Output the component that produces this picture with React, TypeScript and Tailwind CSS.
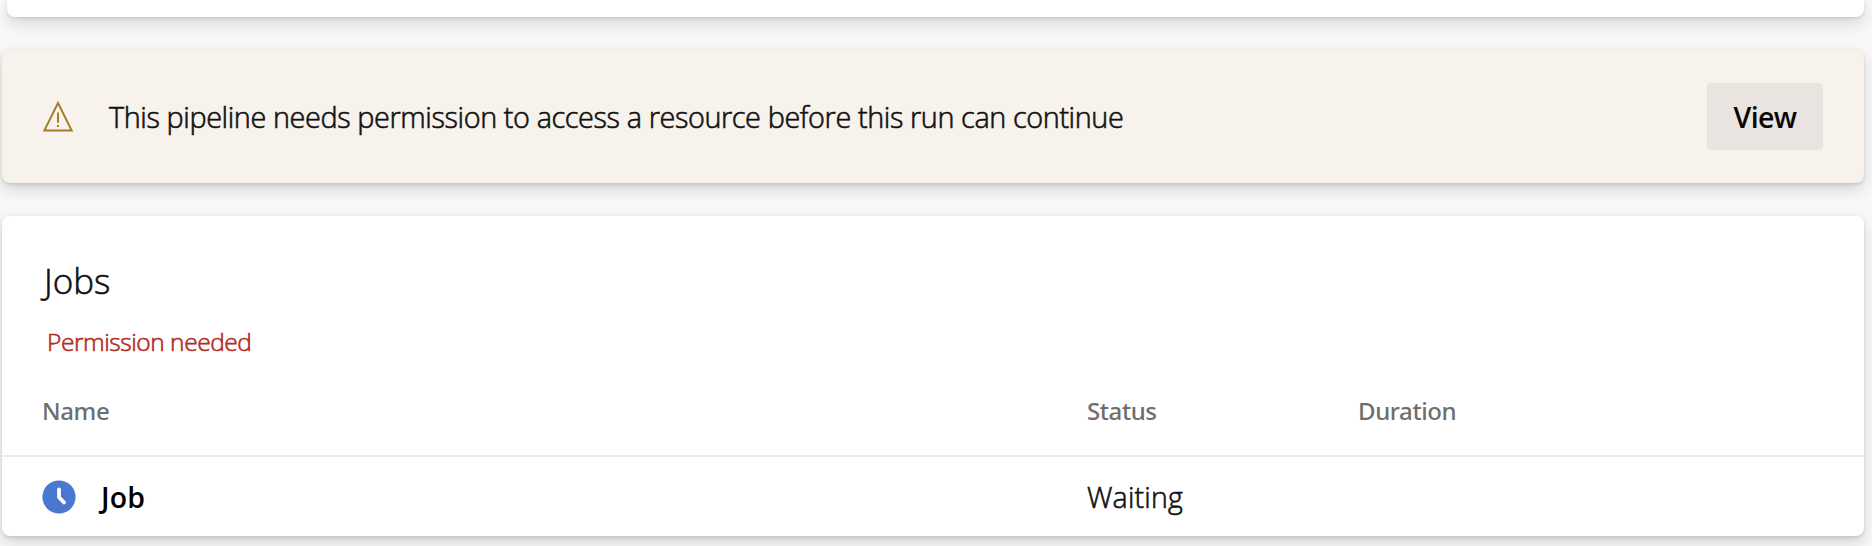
const card =
  "rounded-lg shadow-[0_6.4px_14.4px_rgba(0,0,0,0.132),0_1.2px_3.6px_rgba(0,0,0,0.108)]";

function WarningIcon() {
  return (
    <svg className="h-8 w-8 shrink-0" viewBox="0 0 32 32" fill="none" stroke="#a47d2b" strokeWidth="2">
      <path d="M16 2 29.6 29.4H2.4Z" />
      <path d="M16 11.5V21.8M16 24v2" />
    </svg>
  );
}

function ClockIcon() {
  return (
    <svg className="h-[34px] w-[34px] shrink-0" viewBox="0 0 34 34" fill="none">
      <circle cx="17" cy="17" r="16.6" fill="#4a78d0" />
      <path d="M17 9.5V17.3L22 22.5" stroke="white" strokeWidth="3.8" strokeLinecap="round" strokeLinejoin="round" />
    </svg>
  );
}

export default function App() {
  return (
    <div className="flex h-[546px] w-full flex-col overflow-hidden bg-[#f8f8f8] pl-[2px] pr-2 font-['Open_Sans','Noto_Sans',sans-serif] text-[#111]">
      <div className={`${card} ml-[5px] h-[17px] shrink-0 rounded-t-none bg-white`} />

      <section className={`${card} mt-[33px] flex h-[133px] shrink-0 items-center bg-[#f7f2ec] pl-10 pr-[41px]`}>
        <WarningIcon />
        <p className="ml-[35px] whitespace-nowrap text-[28.8px] font-light leading-10 tracking-[-0.39px] [-webkit-text-stroke:0.6px_#111]">
          This pipeline needs permission to access a resource before this run can continue
        </p>
        <button className="ml-auto h-[67px] w-[116px] rounded-[4px] bg-[#e9e4df] pt-px text-[28.5px] font-semibold tracking-[-0.6px] text-[#080808]">
          View
        </button>
      </section>

      <section className={`${card} mt-[33px] flex h-[320px] shrink-0 flex-col bg-white`}>
        <h2 className="mt-[41px] pl-[42px] text-[35px] font-light leading-[48px] [-webkit-text-stroke:0.6px_#111]">Jobs</h2>
        <p className="mt-[21px] pl-[45px] text-[24.5px] font-light leading-8 tracking-[-0.45px] text-[#b32b20] [-webkit-text-stroke:0.6px_#b32b20]">
          <span>Permission needed</span>
        </p>
        <div className="mt-[37px] grid h-[62px] grid-cols-[1045px_271px_1fr] border-b-2 border-[#eaeaea] pl-10 font-['Noto_Sans',sans-serif] text-[24px] font-medium leading-8 tracking-[-0.4px] text-[#6e6e6e]">
          <div><span>Name</span></div>
          <div><span>Status</span></div>
          <div><span>Duration</span></div>
        </div>
        <div className="grid flex-1 grid-cols-[1045px_271px_1fr] items-center pl-10 text-[28.5px] leading-10">
          <div className="flex items-center">
            <ClockIcon />
            <span className="ml-[25px] font-semibold tracking-[0.2px] text-black">Job</span>
          </div>
          <div><span className="font-light tracking-[0.2px] [-webkit-text-stroke:0.6px_#111]">Waiting</span></div>
          <div />
        </div>
      </section>
    </div>
  );
}
